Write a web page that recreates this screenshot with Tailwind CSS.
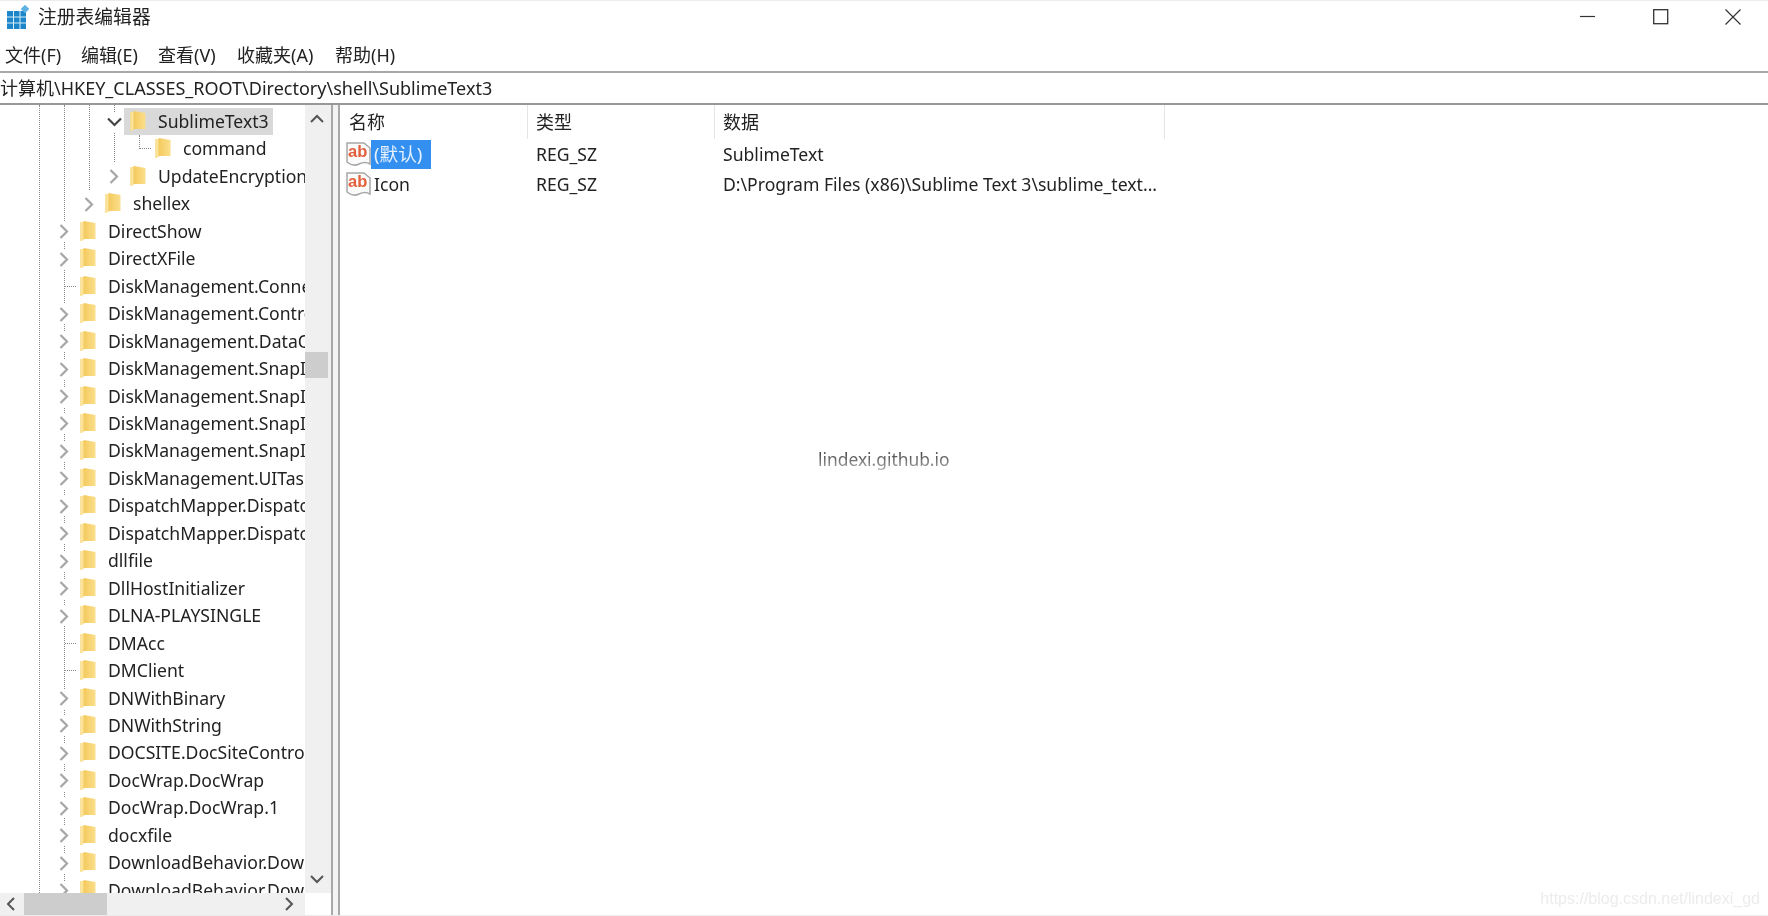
<!DOCTYPE html>
<html lang="zh">
<head>
  <meta charset="UTF-8" />
  <title>注册表编辑器</title>
  <script src="https://cdn.jsdelivr.net/npm/@tailwindcss/browser@4"></script>
</head>
<body class="bg-white text-[#222] overflow-hidden font-['Noto_Sans','Noto_Sans_CJK_SC',sans-serif]">
<div class="relative w-[1768px] h-[916px] flex flex-col overflow-hidden border-t border-b border-[#ececec] blur-[0.35px]">

  <!-- title bar -->
  <div class="h-[31px] flex items-center pl-[7px] shrink-0">
    <svg width="23" height="24" viewBox="0 0 23 24">
      <rect x="0" y="6" width="19" height="18" fill="#1c86c9"/>
      <path d="M0 12H19M0 18H19M6.5 6V24M13 6V24" stroke="#d5ecf8" stroke-width="1"/>
      <rect x="15" y="1" width="6" height="6" fill="#5db2e3" transform="rotate(45 18 4)"/>
    </svg>
    <span class="ml-[8px] text-[18.8px] pt-[2px]">注册表编辑器</span>
    <div class="ml-auto flex items-center">
      <svg width="16" height="16" viewBox="0 0 16 16" class="mr-[57px]"><path d="M0 7.5H15" stroke="#333" stroke-width="1.2"/></svg>
      <svg width="16" height="16" viewBox="0 0 16 16" class="mr-[56px]"><rect x="0.7" y="0.7" width="14" height="14" fill="none" stroke="#333" stroke-width="1.3"/></svg>
      <svg width="16" height="16" viewBox="0 0 16 16" class="mr-[27px]"><path d="M0.5 0.5L15.5 15.5M15.5 0.5L0.5 15.5" stroke="#333" stroke-width="1.2"/></svg>
    </div>
  </div>

  <!-- menu -->
  <div class="h-[39px] flex items-center text-[18px] shrink-0 pt-[7px]">
    <span class="ml-[5px] w-[76px]">文件(F)</span>
    <span class="w-[77px]">编辑(E)</span>
    <span class="w-[79px]">查看(V)</span>
    <span class="w-[98px]">收藏夹(A)</span>
    <span>帮助(H)</span>
  </div>

  <!-- address bar -->
  <div class="h-[34px] border-t-2 border-b-2 border-t-[#a8a8a8] border-b-[#989898] flex items-center text-[18px] shrink-0">
    <span>计算机\HKEY_CLASSES_ROOT\Directory\shell\SublimeText3</span>
  </div>

  <div class="flex-1 flex min-h-0">
    <!-- left pane -->
    <div class="w-[331px] shrink-0 flex flex-col">
      <div class="flex-1 flex min-h-0">
        <div id="tree" class="relative w-[305px] overflow-hidden pt-[3px] text-[17.6px]"></div>
        <div class="w-[26px] bg-[#f0f0f0] relative flex flex-col items-center justify-between py-[9px] pr-[3px]">
          <svg width="14" height="9" viewBox="0 0 14 9"><path d="M1 8L7 2L13 8" fill="none" stroke="#555" stroke-width="2"/></svg>
          <div class="absolute top-[247px] left-0 w-[23px] h-[26px] bg-[#cdcdcd]"></div>
          <svg width="14" height="9" viewBox="0 0 14 9"><path d="M1 1L7 7L13 1" fill="none" stroke="#555" stroke-width="2"/></svg>
        </div>
      </div>
      <div class="h-[22px] bg-[#f0f0f0] flex items-center shrink-0 w-[305px]">
        <svg width="9" height="14" viewBox="0 0 9 14" class="ml-[6px]"><path d="M8 1L2 7L8 13" fill="none" stroke="#555" stroke-width="2"/></svg>
        <div class="ml-[9px] w-[83px] h-full bg-[#cdcdcd]"></div>
        <svg width="9" height="14" viewBox="0 0 9 14" class="ml-auto mr-[11px]"><path d="M1 1L7 7L1 13" fill="none" stroke="#555" stroke-width="2"/></svg>
      </div>
    </div>

    <!-- splitter -->
    <div class="w-[9px] shrink-0 border-l-2 border-r-2 border-[#a9a9a9] bg-[#f4f4f4]"></div>

    <!-- list pane -->
    <div class="flex-1 text-[17.6px]">
      <div class="h-[34px] flex items-center text-[18px]">
        <div class="w-[188px] pl-[9px] border-r border-[#e5e5e5] h-full flex items-center">名称</div>
        <div class="w-[187px] pl-[8px] border-r border-[#e5e5e5] h-full flex items-center">类型</div>
        <div class="w-[450px] pl-[8px] border-r border-[#e5e5e5] h-full flex items-center">数据</div>
      </div>
      <div class="h-[30px] flex items-center">
        <div class="w-[188px] pl-[6px] flex items-center h-full">
          <svg width="25" height="24" viewBox="0 0 25 24" class="shrink-0"><path d="M1 1H18L24 6V22Q19 19 13 22T1 20Z" fill="#fbfbfb" stroke="#a8a8a8" stroke-width="1.5"/><text x="2" y="15" font-size="16.5" font-weight="700" fill="#e2603c" font-family="Liberation Sans">ab</text></svg>
          <span class="bg-[#3390f0] text-[#e6f1ff] text-[18.6px] h-[29px] w-[60px] pl-[3px] flex items-center">(默认)</span>
        </div>
        <div class="w-[187px] pl-[8px]">REG_SZ</div>
        <div class="pl-[8px]">SublimeText</div>
      </div>
      <div class="h-[30px] flex items-center">
        <div class="w-[188px] pl-[6px] flex items-center h-full">
          <svg width="25" height="24" viewBox="0 0 25 24" class="shrink-0"><path d="M1 1H18L24 6V22Q19 19 13 22T1 20Z" fill="#fbfbfb" stroke="#a8a8a8" stroke-width="1.5"/><text x="2" y="15" font-size="16.5" font-weight="700" fill="#e2603c" font-family="Liberation Sans">ab</text></svg>
          <span class="pl-[3px]">Icon</span>
        </div>
        <div class="w-[187px] pl-[8px]">REG_SZ</div>
        <div class="pl-[8px]">D:\Program Files (x86)\Sublime Text 3\sublime_text...</div>
      </div>
    </div>
  </div>

  <!-- watermarks -->
  <div class="absolute left-[818px] top-[445px] text-[17.4px] bg-linear-to-b from-[#222] to-[#bbb] bg-clip-text text-transparent">lindexi.github.io</div>
  <div class="absolute right-[8px] top-[886px] text-[16px] text-[#ececec] font-['Liberation_Sans',sans-serif]">https://blog.csdn.net/lindexi_gd</div>
</div>

<script>
// [indent, name, expander: '>' | 'v' | '-' | '']
const rows = [
  [2, 'SublimeText3', 'v'], [3, 'command', ''], [2, 'UpdateEncryptionSettings', '>'], [1, 'shellex', '>'],
  [0, 'DirectShow', '>'], [0, 'DirectXFile', '>'], [0, 'DiskManagement.Connection', '-'], [0, 'DiskManagement.Control', '>'],
  [0, 'DiskManagement.DataObject', '>'], [0, 'DiskManagement.SnapInAbout', '>'], [0, 'DiskManagement.SnapInComponent', '>'],
  [0, 'DiskManagement.SnapInExtension', '>'], [0, 'DiskManagement.SnapIn', '>'], [0, 'DiskManagement.UITasks', '>'],
  [0, 'DispatchMapper.DispatchMapper', '>'], [0, 'DispatchMapper.DispatchMapper.1', '>'], [0, 'dllfile', '>'],
  [0, 'DllHostInitializer', '>'], [0, 'DLNA-PLAYSINGLE', '>'], [0, 'DMAcc', '-'], [0, 'DMClient', '-'],
  [0, 'DNWithBinary', '>'], [0, 'DNWithString', '>'], [0, 'DOCSITE.DocSiteControl', '>'], [0, 'DocWrap.DocWrap', '>'],
  [0, 'DocWrap.DocWrap.1', '>'], [0, 'docxfile', '>'], [0, 'DownloadBehavior.DownloadBehavior', '>'], [0, 'DownloadBehavior.DownloadBehavior.1', '>']
];
const folder = '<svg width="16" height="21" viewBox="0 0 16 21"><defs><linearGradient id="fg"><stop offset="0" stop-color="#f2c452"/><stop offset="1" stop-color="#fbdf8c"/></linearGradient></defs><path d="M0.5 1H3L4 0L15.5 2V18H4.5L0.5 20Z" fill="url(#fg)"/><path d="M0.5 1H3.5V19L0.5 20Z" fill="#fbe39a"/></svg>';
const chevRight = '<svg width="10" height="15" viewBox="0 0 10 15"><path d="M1.5 1L8 7.5L1.5 14" fill="none" stroke="#a6a6a6" stroke-width="2.2"/></svg>';
const chevDown = '<svg width="15" height="10" viewBox="0 0 15 10"><path d="M1 1.5L7.5 8L14 1.5" fill="none" stroke="#444" stroke-width="2.2"/></svg>';

const guides = [[39, 893], [64, 893], [89, 190], [114, 162]];
const tree = document.getElementById('tree');
guides.forEach(([x, end]) => {
  const g = document.createElement('div');
  g.className = 'absolute top-0 border-l border-dotted border-[#888]';
  g.style.left = x + 'px';
  g.style.height = end - 105 + 'px';
  tree.appendChild(g);
});

rows.forEach(([indent, name, exp], idx) => {
  const left = 80 + indent * 25;
  const row = document.createElement('div');
  row.className = 'relative h-[27.46px] whitespace-nowrap';
  let html = '';
  if (exp === '>' || exp === 'v') {
    html += `<div class="absolute top-[4px] w-[18px] h-[20px] bg-white flex items-center justify-center" style="left:${left - 25}px">${exp === 'v' ? chevDown : chevRight}</div>`;
  }
  if (exp === '-') html += `<div class="absolute top-[13px] w-[11px] border-t border-dotted border-[#888]" style="left:${left - 15}px"></div>`;
  if (idx === 1) html += '<div class="absolute left-[139px] top-0 h-[14px] w-[12px] border-l border-b border-dotted border-[#888]"></div>';
  if (idx === 0) html += '<div class="absolute left-[124px] top-0 w-[149px] h-[27px] bg-[#d9d9d9]"></div>';
  html += `<div class="absolute top-[3px]" style="left:${left}px">${folder}</div>`;
  html += `<span class="absolute top-0 leading-[27px]" style="left:${left + 28}px">${name}</span>`;
  row.innerHTML = html;
  tree.appendChild(row);
});
</script>
</body>
</html>
